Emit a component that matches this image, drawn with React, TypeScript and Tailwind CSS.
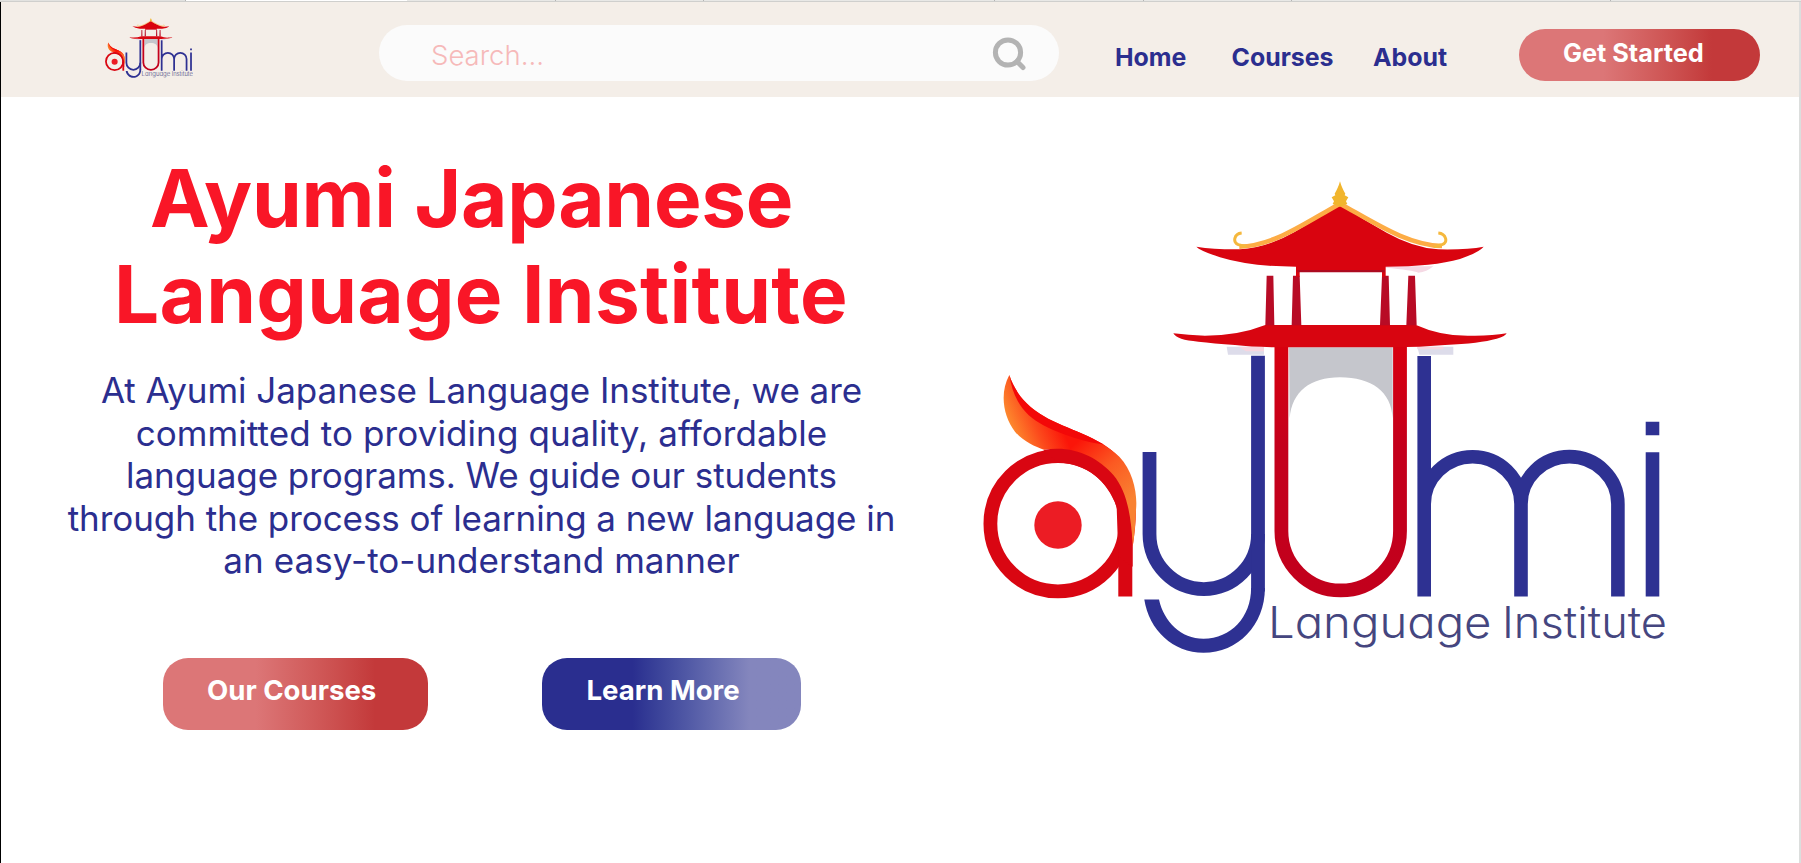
import React from "react";

function Logo({ className, id }: { className: string; id: string }) {
  return (
    <svg viewBox="983 181 685 473" className={className} preserveAspectRatio="none" role="img">
      <defs>
        <linearGradient id={`${id}-flame`} gradientUnits="userSpaceOnUse" x1="160" y1="220" x2="290" y2="165">
          <stop offset="0" stopColor="#fd8a2e" />
          <stop offset="0.5" stopColor="#fc4a1c" />
          <stop offset="1" stopColor="#fb1509" />
        </linearGradient>
        <linearGradient id={`${id}-tail`} gradientUnits="userSpaceOnUse" x1="370" y1="230" x2="525" y2="410">
          <stop offset="0" stopColor="#fb1509" />
          <stop offset="0.5" stopColor="#fb5a22" />
          <stop offset="1" stopColor="#f98232" />
        </linearGradient>
        <linearGradient id={`${id}-u`} gradientUnits="userSpaceOnUse" x1="0" y1="345" x2="0" y2="597">
          <stop offset="0" stopColor="#d8000f" />
          <stop offset="0.4" stopColor="#c4001c" />
          <stop offset="1" stopColor="#c2001c" />
        </linearGradient>
      </defs>

      {/* a */}
      <circle cx="1058" cy="523.7" r="67.6" fill="none" stroke="#d90612" strokeWidth="13.8" />
      <circle cx="1058" cy="525" r="23.7" fill="#ec1c24" />
      <path d="M1118.3 524H1132.3V596.5H1118.3Z" fill="#d90612" />
      <g transform="translate(960 360) scale(.33333)">
        <path d="M148 45C118 100 130 170 165 215C190 245 225 260 252 269C310 264 350 274 385 290C460 325 508 420 518 560C530 480 534 415 512 352C492 305 465 275 430 253C350 205 262 192 200 130C172 102 156 70 148 45Z" fill={`url(#${id}-flame)`} />
        <path d="M330 207C400 235 450 262 478 290C520 335 533 400 528 450Q526 510 518 560C512 450 482 370 430 325C400 300 370 285 335 277Z" fill={`url(#${id}-tail)`} />
        <path d="M148 45C156 70 172 102 200 130C262 192 350 205 430 253C390 250 300 225 240 190C185 158 158 110 148 45Z" fill="#f30808" />
        <path d="M250 270C340 255 410 290 460 345C502 395 514 470 518 560V620L475 590L470 440C440 360 380 310 295 308Z" fill="#d90612" />
      </g>

      {/* y */}
      <path d="M1149.5 452V534A54.2 55 0 0 0 1258 534" fill="none" stroke="#2e3192" strokeWidth="13.8" />
      <path d="M1258 355.7V591.5" fill="none" stroke="#2e3192" strokeWidth="13.8" />
      <path d="M1144.3 599.5H1159C1164 622 1181 638.7 1203.5 638.7C1231 638.7 1251.1 617 1251.1 588H1264.9C1264.9 625 1238 652.8 1203.5 652.8C1173 652.8 1149 630 1144.3 599.5Z" fill="#2e3192" />

      {/* m and i */}
      <path
        d="M1424.2 356V596.5M1424.2 504A48.4 47.3 0 0 1 1521 504V596.5M1521 504A48.4 47.3 0 0 1 1617.9 504V596.5M1652.5 452.3V596.5M1652.5 421.7V435.3"
        fill="none"
        stroke="#2e3192"
        strokeWidth="13.6"
      />

      {/* temple */}
      <g transform="translate(1160 160) scale(.33333)">
        <path d="M387 562H698V775C694 695 635 652 540 652C450 652 396 695 389 775Z" fill="#c5c6cc" />
        <path d="M200 560H312V584H204Z M772 560H880V584H778Z" fill="#dddcea" />
        <path d="M235 560H312V574H258Z M772 560H850V568H772Z" fill="#f7d5df" />
        <path d="M676 319H820Q800 336 775 338Q758 330 676 323Z" fill="#f5d9e4" />
      </g>
      <path d="M1281.4 345V531A59.3 59.4 0 0 0 1400 531V345" fill="none" stroke={`url(#${id}-u)`} strokeWidth="13.8" />
      <g transform="translate(1160 160) scale(.33333)">
        <path d="M40 520Q85 526 135 527Q235 527 316 495H768Q850 532 945 527Q1000 527 1040 520Q1035 530 1010 536Q960 550 855 555Q780 562 698 562H385Q285 562 225 555Q160 550 115 545Q50 540 40 520Z" fill="#d80510" />
        <path d="M320 347H340L343 496H316Z M399 347H419L424 496H395Z M666 347H686L690 496H660Z M745 347H765L770 496H739Z" fill="#b80b25" />
        <path d="M109 260Q165 269 240 268Q320 264 405 215Q475 175 540 132Q610 180 680 218Q760 263 835 268Q920 270 971 260Q957 277 900 297Q820 320 677 320V350H666V336H419V350H408V320Q270 320 180 292Q120 272 109 260Z" fill="#d9040f" />
        <path d="M412 330H674V337H412Z" fill="#ad0a20" />
        <path d="M238 260C340 258 430 192 540 131C650 192 745 256 846 258" fill="none" stroke="#fdac45" strokeWidth="14" />
        <path d="M245 219C222 221 217 248 235 254L260 260M835 219C858 221 866 248 846 254L822 260" fill="none" stroke="#f5b83d" strokeWidth="9" />
        <path d="M540 64C544 78 549 90 556 101L554 106L565 112L558 124L562 132L540 140L518 132L522 124L515 112L526 106L524 101C531 90 536 78 540 64Z" fill="#f1b52d" />
      </g>

      <g className="fill-[#45467f] font-['Inter'] text-[44px] font-light [font-feature-settings:'cv11']">
        <text x="1268" y="637.7" textLength="223.5" lengthAdjust="spacingAndGlyphs">
          Language
        </text>
        <text x="1502" y="637.7" textLength="165" lengthAdjust="spacingAndGlyphs">
          Institute
        </text>
      </g>
    </svg>
  );
}

function Nav() {
  return (
    <header className="flex h-[95px] w-full bg-[#f4eee8]">
      <div className="w-[378px] shrink-0 pt-4 pl-[104px]">
        <Logo id="small" className="h-[60px] w-[88px]" />
      </div>
      <div className="mt-[23px] flex h-14 w-[680px] shrink-0 items-center justify-between rounded-[28px] bg-[#fbfbfb] pr-[31px] pl-[52px]">
        <span className="pt-1 text-[27.5px] leading-8 font-light text-[#f6b9b9]">Search...</span>
        <svg viewBox="0 0 36 36" className="h-9 w-9" fill="none" stroke="#b3b3b3">
          <circle cx="16" cy="17.5" r="12.6" strokeWidth="5" />
          <path d="M25 26.5L31 32.5" strokeWidth="5" strokeLinecap="round" />
        </svg>
      </div>
      <nav className="flex w-[460px] shrink-0 pt-[38.5px] pl-14 text-[24.9px] leading-8 font-bold text-[#2b2e8f]">
        <a className="w-[116.5px]">Home</a>
        <a className="w-[141.5px]">Courses</a>
        <a>About</a>
      </nav>
      <button className="mt-[26.5px] flex h-[52.5px] w-[241px] shrink-0 rounded-[26px] bg-linear-to-r from-[#dc7677] from-35% to-[#c3393a] to-80% pt-[8.5px] pl-[44px] text-[25.3px] leading-8 font-bold text-white">
        Get Started
      </button>
    </header>
  );
}

function TabStrip() {
  return (
    <div className="flex h-[2px] w-full border-b border-[#cfcfcd] bg-[#e8e8e6]">
      <i className="w-[186px] border-r border-[#b5b5b5] bg-[#e2e2e0]" />
      <i className="w-[221px] bg-white" />
      <i className="w-[149px] border-r border-[#b5b5b5]" />
      <i className="w-[148px] border-r border-[#b5b5b5]" />
      <i className="w-[291px] border-r border-[#b5b5b5]" />
      <i className="w-[149px] border-r border-[#b5b5b5]" />
      <i className="w-[148px] border-r border-[#b5b5b5]" />
      <i className="w-[319px] border-r border-[#b5b5b5]" />
    </div>
  );
}

export default function App() {
  return (
    <div className="flex h-[863px] w-full flex-col overflow-hidden bg-white font-['Inter',sans-serif]">
      <TabStrip />
      <div className="flex-1 border-r-2 border-l border-r-[#dcdedd] border-l-black">
        <Nav />
        <main className="flex">
          <section className="w-[960px] shrink-0">
            <h1 className="pt-[53px] text-center text-[80px] leading-[96px] font-bold whitespace-nowrap text-[#f91627]">
              <span className="tracking-[-0.25px]">Ayumi Japanese&nbsp;</span>
              <br />
              <span className="tracking-[0.3px]">Language Institute</span>
            </h1>
            <p className="pt-[27px] pl-px text-center text-[35px] leading-[42.6px] whitespace-nowrap text-[#2b2e8f]">
              <span className="tracking-[-0.05px]">At Ayumi Japanese Language Institute, we are</span>
              <br />
              <span className="tracking-[0.1px]">committed to providing quality, affordable</span>
              <br />
              <span className="tracking-[-0.06px]">language programs. We guide our students</span>
              <br />
              <span className="tracking-[-0.06px]">through the process of learning a new language in</span>
              <br />
              <span className="tracking-[0.05px]">an easy-to-understand manner</span>
            </p>
            <div className="flex gap-[114px] pt-[76px] pl-[162px] text-[27.6px] leading-8 font-bold text-white">
              <button className="flex h-[72px] w-[265px] rounded-[25px] bg-linear-to-r from-[#dc7677] from-35% to-[#c3393a] to-80% pt-[16px] pl-[44px]">
                Our Courses
              </button>
              <button className="flex h-[72px] w-[259px] rounded-[25px] bg-linear-to-r from-[#2a2e8f] from-35% to-[#8486bd] to-80% pt-[16px] pl-[44.5px]">
                Learn More
              </button>
            </div>
          </section>
          <section className="pt-[83.5px] pl-[22px]">
            <Logo id="hero" className="h-[473px] w-[685px]" />
          </section>
        </main>
      </div>
    </div>
  );
}
